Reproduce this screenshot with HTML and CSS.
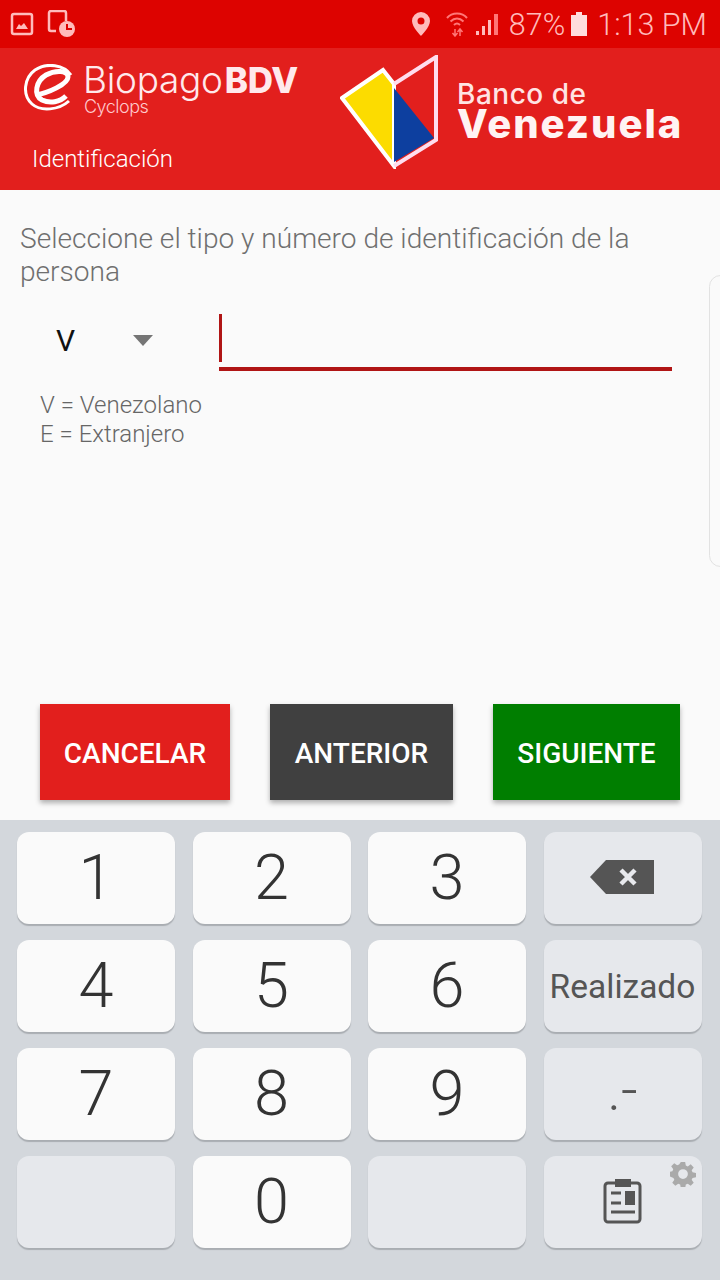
FILE: index.html
```html
<!DOCTYPE html>
<html lang="es">
<head>
    <meta charset="UTF-8">
    <meta name="viewport" content="width=device-width, initial-scale=1.0">
    <title>Identificación</title>
    <link rel="stylesheet" href="styles.css">
</head>
<body>
    <div class="status-bar">
        <div class="status-left">
            <svg width="26" height="24" viewBox="0 0 26 24"><rect x="2" y="2" width="20" height="20" rx="2" fill="none" stroke="#fbb" stroke-width="2.5"/><path d="M6 17l3-5 2 2 3-3 4 6z" fill="#fbb"/></svg>
            <svg width="30" height="28" viewBox="0 0 30 28"><path d="M9 21H4a2 2 0 0 1-2-2V3a2 2 0 0 1 2-2h13a2 2 0 0 1 2 2v8" fill="none" stroke="#fbb" stroke-width="2.5"/><circle cx="20" cy="19" r="8" fill="#fbb"/><path d="M20 14v5h5" fill="none" stroke="#d00" stroke-width="2"/></svg>
        </div>
        <div class="status-right">
            <svg class="ic-pin" width="20" height="26" viewBox="0 0 20 26"><path fill-rule="evenodd" d="M10 1a9 9 0 0 1 9 9c0 6-9 15-9 15S1 16 1 10a9 9 0 0 1 9-9zm0 5.500a3.500 3.500 0 1 0 0 7 3.500 3.500 0 0 0 0-7z" fill="#fbb"/></svg>
            <svg class="ic-wifi" width="22" height="26" viewBox="0 0 22 26"><path d="M1 7c5-6 15-6 20 0M4.500 10.500c4-4 9-4 13 0M8 14c2-2 4-2 6 0" fill="none" stroke="#f77" stroke-width="2"/><path d="M9 18v7M6.500 22l2.500 3 2.500-3M14 25v-7M11.500 21l2.500-3 2.500 3" fill="none" stroke="#f77" stroke-width="1.500"/></svg>
            <svg class="ic-signal" width="24" height="24" viewBox="0 0 24 24"><path d="M1 23h3v-4H1zM7 23h3v-9H7zM13 23h3V8h-3z" fill="#fbb"/><path d="M19 23h4V2h-4z" fill="#f77"/></svg>
            <span class="status-pct">87%</span>
            <svg class="ic-batt" width="16" height="24" viewBox="0 0 16 24"><path d="M5 0h6v3h5v21H0V3h5z" fill="#fdd"/></svg>
            <span class="status-time">1:13 PM</span>
        </div>
    </div>

    <header class="app-header">
        <div class="header-left">
            <div class="brand">
                <svg class="brand-mark" width="50" height="48" viewBox="0 0 50 48">
                    <path d="M47 11C40 1 23-2 11 6C0 14-2 31 8 40C17 48 35 46 45 37" fill="none" stroke="#fff" stroke-width="3"/>
                    <path d="M12 31C24 29 44 20 44 13C44 6 31 6 22 11C12 17 9 31 18 36C26 40 36 38 42 32" fill="none" stroke="#fff" stroke-width="5"/>
                </svg>
                <div class="brand-text">
                    <div class="brand-name">Biopago<b>BDV</b></div>
                    <div class="brand-sub">Cyclops</div>
                </div>
            </div>
            <div class="screen-title">Identificación</div>
        </div>
        <div class="bank">
            <svg class="bank-mark" width="100" height="114" viewBox="0 0 100 114">
                <path d="M2 43L43 15L54 29V111z" fill="#fcdc00" stroke="#fff" stroke-width="4"/>
                <path d="M54 33L94 83L54 107z" fill="#0d3f9f"/>
                <path d="M54 29L96 2V85L54 111" fill="none" stroke="#fde" stroke-width="4"/>
            </svg>
            <div class="bank-text">
                <div class="bank-top">Banco de</div>
                <div class="bank-name">Venezuela</div>
            </div>
        </div>
    </header>

    <main class="content">
        <p class="prompt">Seleccione el tipo y número de identificación de la persona</p>
        <div class="id-row">
            <div class="id-type">
                <span>V</span>
                <i class="arrow"></i>
            </div>
            <div class="id-input"><i class="caret"></i></div>
        </div>
        <div class="legend">
            <div>V = Venezolano</div>
            <div>E = Extranjero</div>
        </div>
        <div class="actions">
            <button class="btn btn-red">CANCELAR</button>
            <button class="btn btn-dark">ANTERIOR</button>
            <button class="btn btn-green">SIGUIENTE</button>
        </div>
        <div class="edge-handle"></div>
    </main>

    <section class="keyboard">
        <div class="key">1</div>
        <div class="key">2</div>
        <div class="key">3</div>
        <div class="key key-fn">
            <svg class="key-back" width="66" height="36" viewBox="0 0 66 36"><path fill-rule="evenodd" d="M17 1H65V35H17L1 18z" fill="#555"/><path d="M32 11L46 25M46 11L32 25" stroke="#e8e9ed" stroke-width="4.500"/></svg>
        </div>
        <div class="key">4</div>
        <div class="key">5</div>
        <div class="key">6</div>
        <div class="key key-fn key-label">Realizado</div>
        <div class="key">7</div>
        <div class="key">8</div>
        <div class="key">9</div>
        <div class="key key-fn key-punct">.-</div>
        <div class="key key-fn"></div>
        <div class="key">0</div>
        <div class="key key-fn"></div>
        <div class="key key-fn">
            <svg width="40" height="46" viewBox="0 0 40 46"><rect x="2" y="5" width="35" height="39" rx="3" fill="none" stroke="#555" stroke-width="3"/><rect x="12" y="1" width="16" height="8" fill="#555"/><path d="M8 15h10M8 25h10M8 34h24" stroke="#555" stroke-width="3"/><rect x="22" y="13" width="10" height="14" fill="#555"/></svg>
            <svg class="key-gear" width="26" height="26" viewBox="0 0 24 24"><path fill-rule="evenodd" d="M10 1h4l.6 3.200 1.800.8 2.700-1.900 2.800 2.800-1.900 2.700.8 1.800 3.200.6v4l-3.200.6-.8 1.800 1.900 2.700-2.800 2.800-2.700-1.900-1.800.8-.6 3.200h-4l-.6-3.200-1.800-.8-2.700 1.900-2.800-2.800 1.900-2.700-.8-1.800L-1 14v-4l3.200-.6.8-1.800-1.900-2.700 2.800-2.800 2.700 1.900 1.800-.8zM12 7.500a4.500 4.500 0 1 0 0 9 4.500 4.500 0 0 0 0-9z" fill="#aaa"/></svg>
        </div>
    </section>
</body>
</html>
```

FILE: styles.css
```css
* {
    box-sizing: border-box;
}
body {
    margin: 0;
    width: 720px;
    height: 1280px;
    display: flex;
    flex-direction: column;
    font-family: Roboto, "Liberation Sans", sans-serif;
    background: #fafafa;
    overflow: hidden;
}

/* status bar */
.status-bar {
    height: 48px;
    background: #dd0300;
    display: flex;
    justify-content: space-between;
    align-items: center;
    padding: 0 13px 0 10px;
    color: #fbb;
}
.status-left {
    display: flex;
    align-items: center;
    gap: 11px;
}
.status-right {
    display: flex;
    align-items: center;
}
.ic-wifi {
    margin-left: 15px;
}
.ic-signal {
    margin-left: 7px;
}
.status-pct {
    font-size: 30.500px;
    font-weight: 300;
    margin-left: 10px;
}
.ic-batt {
    margin-left: 6px;
}
.status-time {
    font-size: 30.500px;
    font-weight: 300;
    margin-left: 10px;
}

/* header */
.app-header {
    height: 142px;
    background: #e21f1d;
    display: flex;
    padding: 0 0 0 24px;
    color: #fff;
}
.header-left {
    width: 316px;
    display: flex;
    flex-direction: column;
}
.brand {
    display: flex;
    margin-top: 16px;
}
.brand-text {
    margin-left: 9px;
}
.brand-name {
    font-family: Inter, sans-serif;
    font-size: 37px;
    font-weight: 300;
    line-height: 32px;
    letter-spacing: -0.3px;
    white-space: nowrap;
    color: #ffe9ec;
}
.brand-name b {
    font-size: 35px;
    font-weight: 800;
    margin-left: 2px;
}
.brand-sub {
    font-family: Inter, sans-serif;
    font-size: 18px;
    line-height: 18px;
    font-weight: 300;
    letter-spacing: -0.5px;
    margin: 2px 0 0 1px;
    color: #ffc9cc;
}
.screen-title {
    font-size: 24px;
    font-weight: 300;
    margin: 29px 0 0 8px;
}
.bank {
    display: flex;
    margin-top: 7px;
}
.bank-mark {
    margin-right: 18px;
}
.bank-text {
    font-family: Inter, sans-serif;
    margin-top: 24px;
    margin-left: -1px;
}
.bank-top {
    font-size: 28px;
    line-height: 30px;
    font-weight: 500;
    letter-spacing: 0.5px;
    color: #ffe4e4;
}
.bank-name {
    font-size: 40px;
    line-height: 30px;
    font-weight: 800;
    letter-spacing: 2px;
    color: #fff3f3;
}

/* form */
.content {
    position: relative;
    flex: 1;
    display: flex;
    flex-direction: column;
    padding: 32px 40px 20px 20px;
    background: #fafafa;
}
.prompt {
    margin: 0;
    font-size: 28.100px;
    line-height: 33px;
    font-weight: 300;
    color: #6f6f6f;
}
.id-row {
    display: flex;
    margin-top: 26px;
    height: 57px;
}
.id-type {
    width: 199px;
    display: flex;
    align-items: center;
    padding: 0 0 4px 36px;
    font-size: 30px;
    color: #111;
}
.arrow {
    margin-left: 58px;
    width: 0;
    height: 0;
    border-left: 10px solid transparent;
    border-right: 10px solid transparent;
    border-top: 11px solid #757575;
}
.id-input {
    flex: 1;
    margin-right: 8px;
    border-bottom: 4px solid #b01515;
    display: flex;
    align-items: flex-start;
}
.caret {
    width: 3px;
    height: 48px;
    background: #b01515;
}
.legend {
    margin: 20px 0 0 20px;
    font-size: 24px;
    line-height: 29px;
    font-weight: 300;
    color: #666;
}
.actions {
    margin-top: auto;
    padding-left: 20px;
    display: flex;
}
.btn {
    height: 96px;
    border: 0;
    padding: 2px 0 0;
    font-family: Roboto, sans-serif;
    font-size: 28px;
    font-weight: 500;
    color: #fff;
    box-shadow: 0 3px 5px rgba(0, 0, 0, 0.3);
}
.btn-red {
    width: 190px;
    background: #e21f1d;
}
.btn-dark {
    width: 183px;
    margin-left: 40px;
    background: #404040;
}
.btn-green {
    width: 187px;
    margin-left: 40px;
    background: #007e00;
}
.edge-handle {
    position: absolute;
    right: -12px;
    top: 85px;
    width: 23px;
    height: 292px;
    border: 1px solid #e2e2e2;
    border-radius: 14px;
}

/* keyboard */
.keyboard {
    height: 460px;
    background: #d3d7dc;
    padding: 12px 18px 0 17px;
    display: grid;
    grid-template-columns: repeat(4, 158px);
    grid-template-rows: repeat(4, 92px);
    column-gap: 17.500px;
    row-gap: 16px;
}
.key {
    position: relative;
    background: #fafafa;
    border-radius: 12px;
    box-shadow: 0 2px 1px #a9adb2;
    display: flex;
    align-items: center;
    justify-content: center;
    padding-bottom: 2px;
    font-size: 63px;
    font-weight: 300;
    color: #333;
}
.key-fn {
    background: #e6e8ec;
}
.key-back {
    margin-right: 2px;
}
.key-label {
    font-size: 33.500px;
    font-weight: 400;
    color: #555;
    padding-bottom: 0;
}
.key-punct {
    font-size: 58px;
    font-weight: 300;
    color: #555;
    padding-bottom: 8px;
}
.key-gear {
    position: absolute;
    top: 5px;
    right: 6px;
}
```
